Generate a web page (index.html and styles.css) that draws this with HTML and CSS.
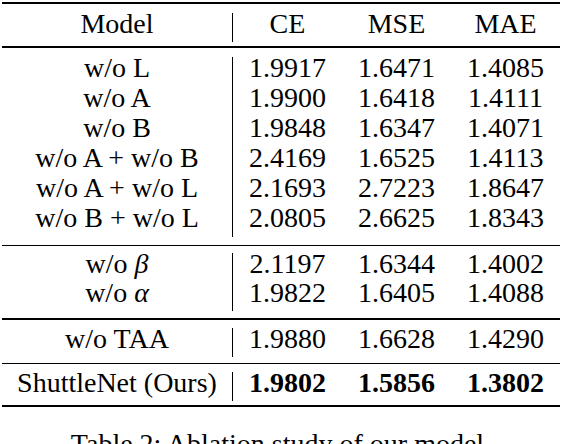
FILE: index.html
```html
<!DOCTYPE html>
<html lang="en">
<head>
    <meta charset="UTF-8">
    <meta name="viewport" content="width=device-width, initial-scale=1.0">
    <title>Table 2</title>
    <link rel="stylesheet" href="styles.css">
</head>
<body>
    <div class="page">
        <div class="tbl">
            <div class="rule thick"></div>
            <div class="group head">
                <div class="row">
                    <div class="name">Model</div>
                    <div class="num">CE</div>
                    <div class="num">MSE</div>
                    <div class="num">MAE</div>
                </div>
            </div>
            <div class="rule"></div>
            <div class="group g1">
                <div class="row"><div class="name">w/o L</div><div class="num">1.9917</div><div class="num">1.6471</div><div class="num">1.4085</div></div>
                <div class="row"><div class="name">w/o A</div><div class="num">1.9900</div><div class="num">1.6418</div><div class="num">1.4111</div></div>
                <div class="row"><div class="name">w/o B</div><div class="num">1.9848</div><div class="num">1.6347</div><div class="num">1.4071</div></div>
                <div class="row"><div class="name">w/o A + w/o B</div><div class="num">2.4169</div><div class="num">1.6525</div><div class="num">1.4113</div></div>
                <div class="row"><div class="name">w/o A + w/o L</div><div class="num">2.1693</div><div class="num">2.7223</div><div class="num">1.8647</div></div>
                <div class="row"><div class="name">w/o B + w/o L</div><div class="num">2.0805</div><div class="num">2.6625</div><div class="num">1.8343</div></div>
            </div>
            <div class="rule"></div>
            <div class="group g2">
                <div class="row"><div class="name">w/o <i class="math">&beta;</i></div><div class="num">2.1197</div><div class="num">1.6344</div><div class="num">1.4002</div></div>
                <div class="row"><div class="name">w/o <i class="math">&alpha;</i></div><div class="num">1.9822</div><div class="num">1.6405</div><div class="num">1.4088</div></div>
            </div>
            <div class="rule"></div>
            <div class="group g3">
                <div class="row"><div class="name">w/o TAA</div><div class="num">1.9880</div><div class="num">1.6628</div><div class="num">1.4290</div></div>
            </div>
            <div class="rule"></div>
            <div class="group g4">
                <div class="row best"><div class="name">ShuttleNet (Ours)</div><div class="num">1.9802</div><div class="num">1.5856</div><div class="num">1.3802</div></div>
            </div>
            <div class="rule thick"></div>
        </div>
        <p class="caption">Table 2: Ablation study of our model.</p>
    </div>
</body>
</html>
```

FILE: styles.css
```css
*{
    margin: 0;
    padding: 0;
    box-sizing: border-box;
}
body{
    background-color: #fff;
    color: #000;
    font-family: "Liberation Serif", "Times New Roman", serif;
    font-size: 28px;
}
.page{
    width: 562px;
    height: 444px;
    overflow: hidden;
}
.tbl{
    width: 558px;
    margin: 2px 0 0 2px;
}
.rule{
    height: 1.5px;
    background-color: #000;
}
.rule.thick{
    height: 2px;
}
.head{
    padding: 9px 0 4px;
}
.g1{
    padding: 9px 0 8px;
}
.g2{
    padding: 7px 0 7px;
}
.g3{
    padding: 8px 0 6px;
}
.g4{
    padding: 8px 0 4px;
}
.row{
    display: grid;
    grid-template-columns: 231px repeat(3, 1fr);
}
/* text sits low in the row, like a LaTeX strut */
.name,
.num{
    text-align: center;
    line-height: 22px;
    padding-bottom: 7px;
}
.g1 .name,
.g1 .num{
    padding-bottom: 8px;
}
.name{
    border-right: 1.5px solid #000;
}
.best .num{
    font-weight: bold;
}
.math{
    font-style: italic;
}
.caption{
    margin-top: 21px;
    line-height: 32px;
    text-align: center;
}
```
